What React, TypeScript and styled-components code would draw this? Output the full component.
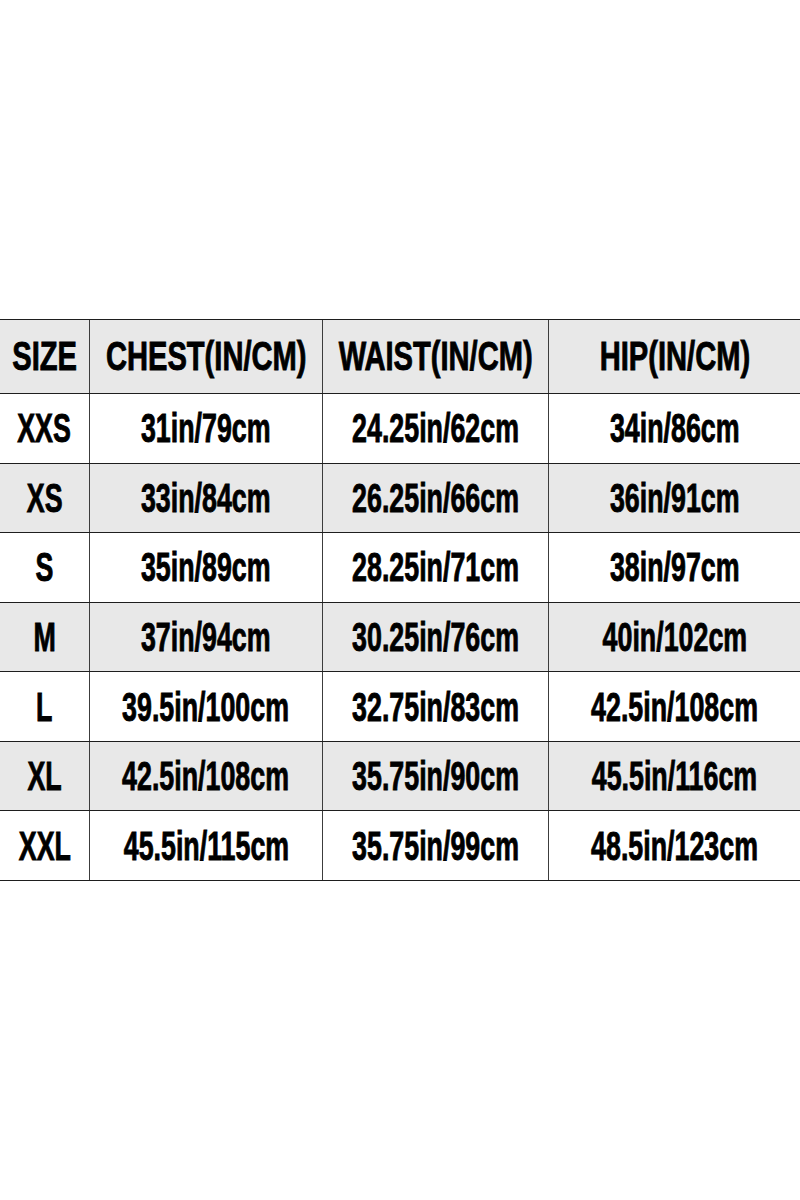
import styled, { createGlobalStyle } from 'styled-components';

const GlobalStyle = createGlobalStyle`
  html, body {
    margin: 0;
    padding: 0;
    background: #ffffff;
  }

  * {
    box-sizing: border-box;
  }
`;

const headers = ['SIZE', 'CHEST(IN/CM)', 'WAIST(IN/CM)', 'HIP(IN/CM)'];

const sizes = [
  ['XXS', '31in/79cm', '24.25in/62cm', '34in/86cm'],
  ['XS', '33in/84cm', '26.25in/66cm', '36in/91cm'],
  ['S', '35in/89cm', '28.25in/71cm', '38in/97cm'],
  ['M', '37in/94cm', '30.25in/76cm', '40in/102cm'],
  ['L', '39.5in/100cm', '32.75in/83cm', '42.5in/108cm'],
  ['XL', '42.5in/108cm', '35.75in/90cm', '45.5in/116cm'],
  ['XXL', '45.5in/115cm', '35.75in/99cm', '48.5in/123cm'],
];

const App = () => {
  return (
    <>
      <GlobalStyle />
      <Page>
        <Chart>
          <Row $shaded $head>
            {headers.map((h) => (
              <Cell key={h}>
                <Label $head>{h}</Label>
              </Cell>
            ))}
          </Row>
          {sizes.map((row, i) => (
            <Row key={row[0]} $shaded={i % 2 === 1}>
              {row.map((value, j) => (
                <Cell key={j}>
                  <Label>{value}</Label>
                </Cell>
              ))}
            </Row>
          ))}
        </Chart>
      </Page>
    </>
  );
};

const Page = styled.main`
  width: 800px;
  height: 1200px;
  padding-top: 319px;
  background: #ffffff;
  overflow: hidden;
`;

const Chart = styled.section`
  width: 800px;
  border-top: 1px solid #1e1e1e;
`;

const Row = styled.div<{ $shaded?: boolean; $head?: boolean }>`
  display: grid;
  grid-template-columns: 90px 233px 226px 1fr;
  height: ${({ $head }) => ($head ? '74px' : '69.57px')};
  background: ${({ $shaded }) => ($shaded ? '#e8e8e8' : '#ffffff')};
  border-bottom: 1px solid #1e1e1e;
`;

const Cell = styled.div`
  display: flex;
  align-items: center;
  justify-content: center;
  border-right: 1px solid #3c3c3c;

  &:last-child {
    border-right: none;
  }
`;

const Label = styled.span<{ $head?: boolean }>`
  display: inline-block;
  font-family: 'Liberation Sans', Arial, sans-serif;
  font-weight: 700;
  font-size: ${({ $head }) => ($head ? '41px' : '40px')};
  line-height: 1;
  color: #000000;
  white-space: nowrap;
  transform: scaleX(${({ $head }) => ($head ? 0.71 : 0.67)});
  -webkit-text-stroke: 0.9px #000000;
`;

export default App;
